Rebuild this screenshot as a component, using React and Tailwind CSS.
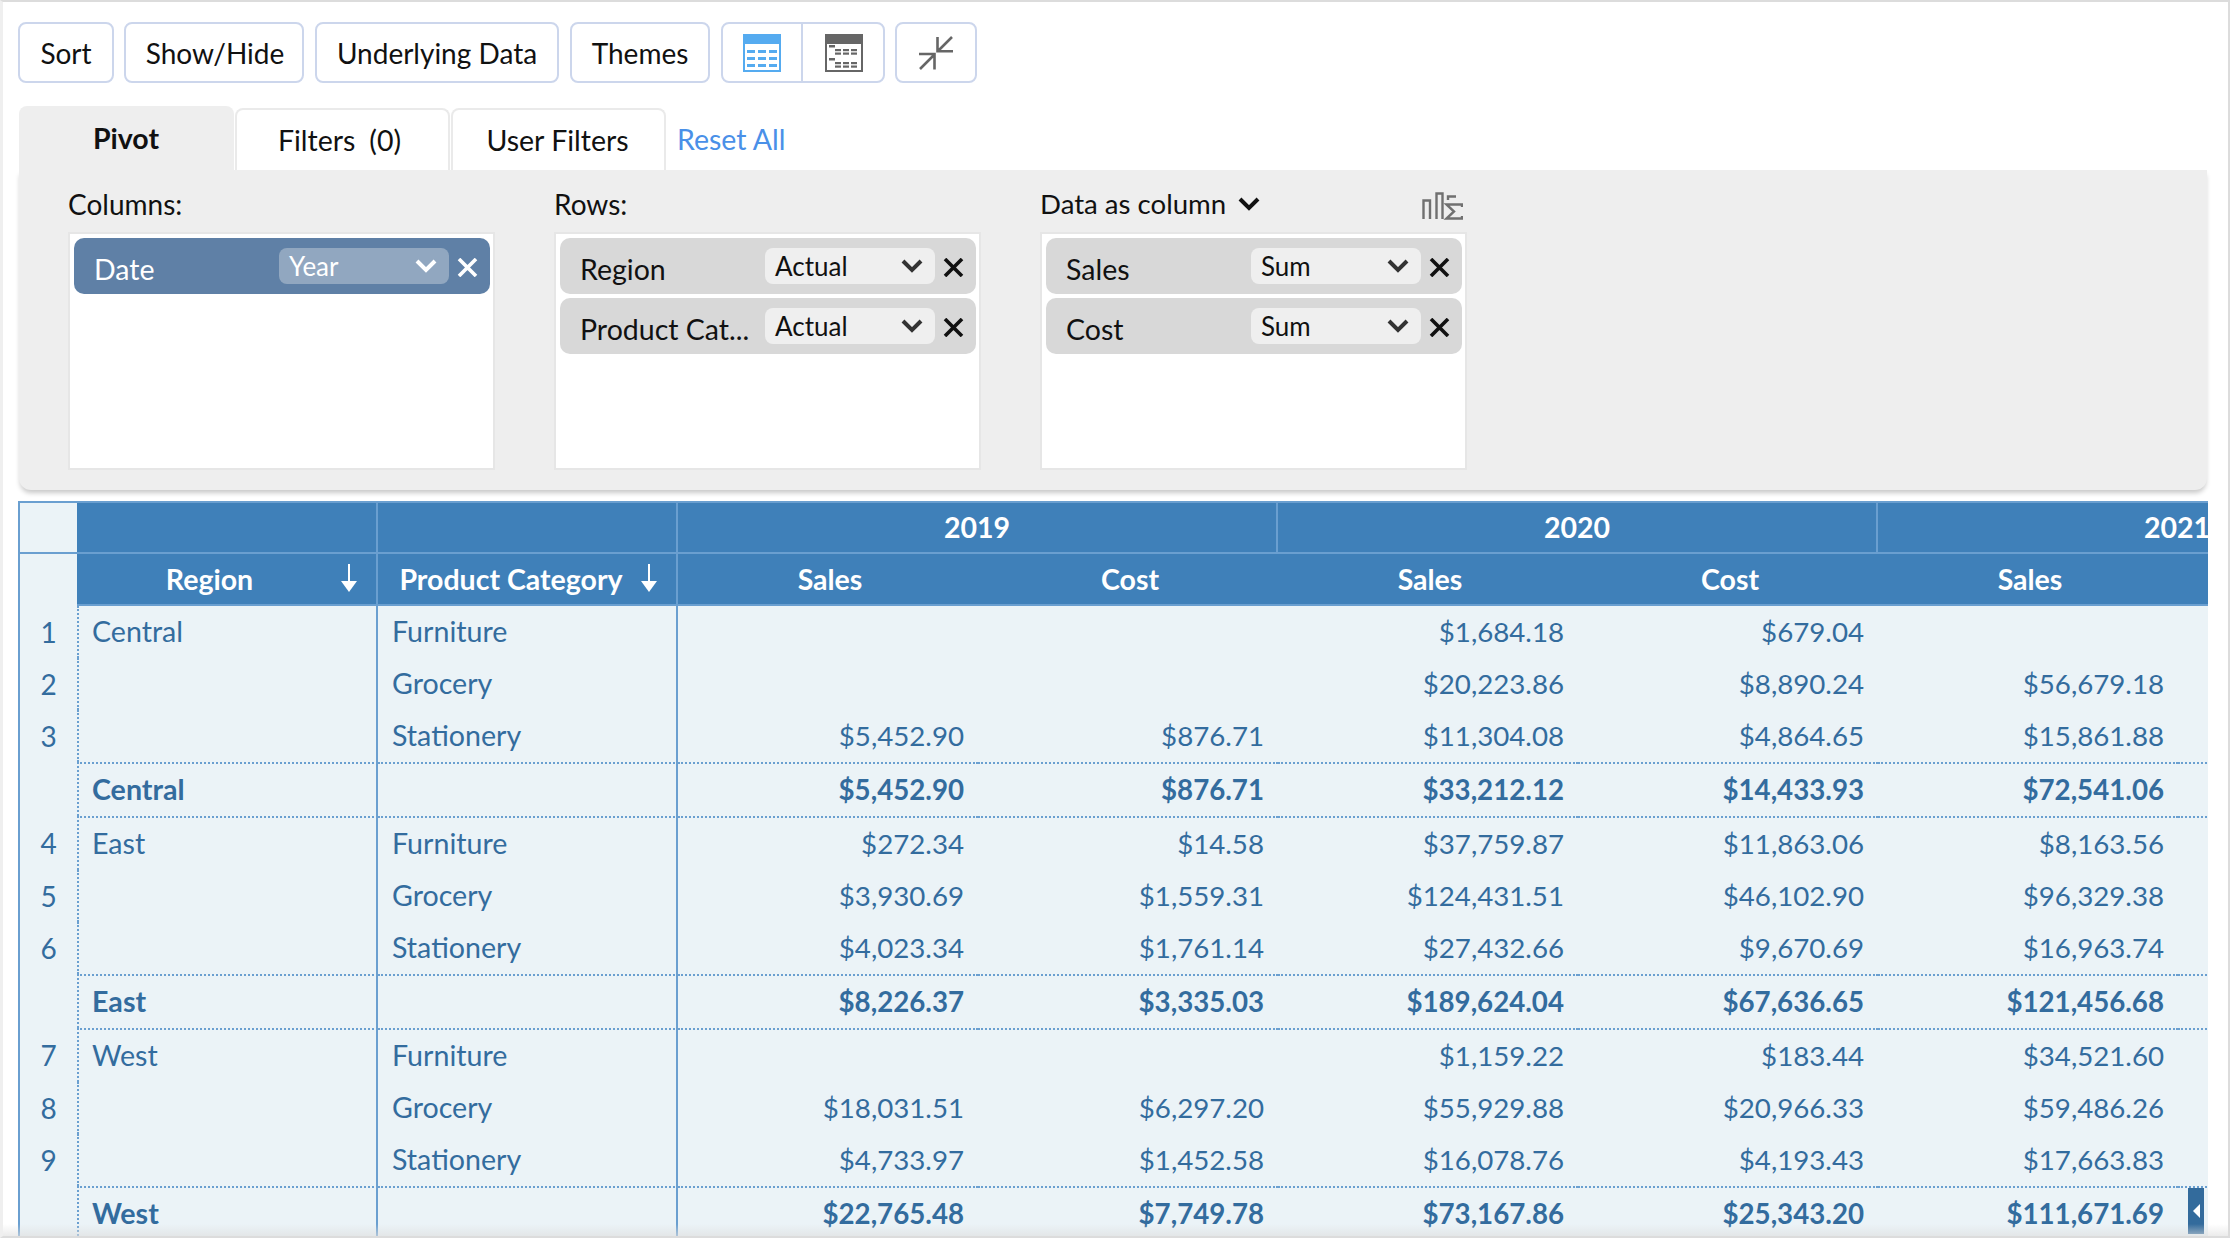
import React from 'react';

const ROWS = [
  { n: 1, region: 'Central', cat: 'Furniture', first: true, v: ['', '', '$1,684.18', '$679.04', ''] },
  { n: 2, cat: 'Grocery', v: ['', '', '$20,223.86', '$8,890.24', '$56,679.18'] },
  { n: 3, cat: 'Stationery', v: ['$5,452.90', '$876.71', '$11,304.08', '$4,864.65', '$15,861.88'] },
  { total: true, region: 'Central', v: ['$5,452.90', '$876.71', '$33,212.12', '$14,433.93', '$72,541.06'] },
  { n: 4, region: 'East', cat: 'Furniture', first: true, v: ['$272.34', '$14.58', '$37,759.87', '$11,863.06', '$8,163.56'] },
  { n: 5, cat: 'Grocery', v: ['$3,930.69', '$1,559.31', '$124,431.51', '$46,102.90', '$96,329.38'] },
  { n: 6, cat: 'Stationery', v: ['$4,023.34', '$1,761.14', '$27,432.66', '$9,670.69', '$16,963.74'] },
  { total: true, region: 'East', v: ['$8,226.37', '$3,335.03', '$189,624.04', '$67,636.65', '$121,456.68'] },
  { n: 7, region: 'West', cat: 'Furniture', first: true, v: ['', '', '$1,159.22', '$183.44', '$34,521.60'] },
  { n: 8, cat: 'Grocery', v: ['$18,031.51', '$6,297.20', '$55,929.88', '$20,966.33', '$59,486.26'] },
  { n: 9, cat: 'Stationery', v: ['$4,733.97', '$1,452.58', '$16,078.76', '$4,193.43', '$17,663.83'] },
  { total: true, region: 'West', v: ['$22,765.48', '$7,749.78', '$73,167.86', '$25,343.20', '$111,671.69'] },
];

const btn = 'h-[61px] flex items-center justify-center bg-white border-2 border-[#ccd6ec] rounded-lg';

function Chevron({ className, color = '#333' }) {
  return (
    <svg width="22" height="14" viewBox="0 0 22 14" className={className}>
      <polyline points="2,2 11,11 20,2" fill="none" stroke={color} strokeWidth="4" />
    </svg>
  );
}

function Cross({ color = '#111' }) {
  return (
    <svg width="21" height="19" viewBox="0 0 21 19" className="shrink-0 mt-[2px]">
      <path d="M2 1 L19 18 M19 1 L2 18" fill="none" stroke={color} strokeWidth="3.6" />
    </svg>
  );
}

function SortArrow() {
  return (
    <svg width="18" height="30" viewBox="0 0 18 30" className="absolute right-[18px] top-[9px]">
      <path d="M9 1 V20" stroke="#fff" strokeWidth="2" />
      <path d="M1 18 H17 L9 29 Z" fill="#fff" />
    </svg>
  );
}

function GridIcon({ color, line, gray }) {
  const rows = [16, 23, 30];
  return (
    <svg width="38" height="38" viewBox="0 0 38 38">
      <rect x="0" y="0" width="38" height="38" fill={color} />
      <rect x="2" y="10" width="34" height="26" fill="#fff" />
      {gray ? (
        <>
          <rect x="4" y="11" width="6" height="2.5" fill={line} />
          <rect x="4" y="24" width="6" height="2.5" fill={line} />
          {[15, 18.5, 28, 31.5].map((y) =>
            [10, 18, 26].map((x) => <rect key={`${x}-${y}`} x={x} y={y} width="6" height="2.2" fill={line} />)
          )}
        </>
      ) : (
        rows.map((y) =>
          [4, 15, 26].map((x) => <rect key={`${x}-${y}`} x={x} y={y} width="8" height="3" fill={line} />)
        )
      )}
    </svg>
  );
}

function Chip({ label, value, active }) {
  return (
    <div className={`h-[56px] rounded-[10px] flex items-center pl-[20px] pr-[12px] ${active ? 'bg-[#5f80a6] text-white' : 'bg-[#d8d8d8] text-[#111]'}`}>
      <span className="flex-1 pt-[6px] text-[28.5px] whitespace-nowrap overflow-hidden">{label}</span>
      <div className={`w-[170px] h-[36px] rounded-lg flex items-center justify-between pl-[10px] pr-[12px] text-[26px] ${active ? 'bg-[#91a7c0] text-white' : 'bg-[#efefef] text-[#111]'}`}>
        <span>{value}</span>
        <Chevron color={active ? '#fff' : '#333'} />
      </div>
      <div className="ml-[8px]">
        <Cross color={active ? '#fff' : '#111'} />
      </div>
    </div>
  );
}

function Box({ children }) {
  return (
    <div className="w-[427px] h-[238px] bg-white border-2 border-[#e6e6e6] pt-[4px] pl-[4px] pr-[3px] flex flex-col gap-[4px]">{children}</div>
  );
}

export default function App() {
  return (
    <div className="relative w-[2230px] h-[1238px] overflow-hidden bg-white border-t-2 border-t-[#dcdcdc] border-l-[3px] border-l-[#efefef] border-r-2 border-r-[#dcdcdc] border-b-2 border-b-[#dcdcdc] font-[Lato,sans-serif] text-[28px] text-[#111] pl-[15px]">
      {/* toolbar */}
      <div className="flex mt-[20px]">
        <button className={`${btn} w-[96px]`}>Sort</button>
        <button className={`${btn} w-[180px] ml-[10px] pl-[2px]`}>Show/Hide</button>
        <button className={`${btn} w-[244px] ml-[11px]`}>Underlying Data</button>
        <button className={`${btn} w-[140px] ml-[11px]`}>Themes</button>
        <div className={`${btn} w-[164px] ml-[11px]`}>
          <div className="w-[80px] h-full flex items-center justify-center border-r-2 border-r-[#ccd6ec]">
            <GridIcon color="#55abf0" line="#55abf0" />
          </div>
          <div className="flex-1 h-full flex items-center justify-center pl-[2px]">
            <GridIcon color="#666" line="#666" gray />
          </div>
        </div>
        <div className={`${btn} w-[82px] ml-[10px]`}>
          <svg width="36" height="36" viewBox="0 0 36 36" fill="none" stroke="#666" strokeWidth="2.6">
            <path d="M34 2 L20 16 M19.5 2 V16.2 H35" />
            <path d="M2 34 L16 20 M1 19 H16.5 V34.5" />
          </svg>
        </div>
      </div>

      {/* tabs */}
      <div className="flex items-end ml-px mt-[23px] h-[64px] text-[28.5px]">
        <div className="w-[215px] h-[64px] bg-[#eeeeee] rounded-t-lg flex items-center justify-center font-bold pr-[1px]">Pivot</div>
        <div className="w-[215px] h-[62px] ml-[1px] border-2 border-b-0 border-[#eaeaea] rounded-t-lg flex items-center justify-center gap-[14px] pr-[6px]">
          <span>Filters</span>
          <span>(0)</span>
        </div>
        <div className="w-[215px] h-[62px] ml-[1px] border-2 border-b-0 border-[#eaeaea] rounded-t-lg flex items-center justify-center pr-[2px]">User Filters</div>
        <a className="ml-[11px] h-[62px] flex items-center text-[#4a90e8]">Reset All</a>
      </div>

      {/* pivot panel */}
      <div className="ml-px w-[2188px] h-[320px] bg-[#eeeeee] rounded-b-xl shadow-[0_4px_5px_-1px_rgba(0,0,0,0.22)] pl-[49px] flex gap-[59px]">
        <div>
          <div className="h-[62px] flex items-center pt-[5px]">Columns:</div>
          <Box>
            <Chip label="Date" value="Year" active />
          </Box>
        </div>
        <div>
          <div className="h-[62px] flex items-center pt-[5px]">Rows:</div>
          <Box>
            <Chip label="Region" value="Actual" />
            <Chip label="Product Cat..." value="Actual" />
          </Box>
        </div>
        <div>
          <div className="h-[62px] w-[427px] flex items-center pt-[5px]">
            <span className="text-[27.6px]">Data as column</span>
            <Chevron className="ml-[12px]" color="#111" />
            <svg width="42" height="30" viewBox="0 0 42 30" fill="none" stroke="#707070" strokeWidth="2.4" className="ml-auto mr-[4px] mt-[4px]">
              <path d="M2.5 28 V9.5 H9 V28" />
              <path d="M15.5 28 V2.5 H21.5 V28" />
              <path d="M27 9 V5.5 H35" />
              <path d="M41 16 V13.5 H25.5 L33 20.5 L25.5 27.5 H41 V25" />
            </svg>
          </div>
          <Box>
            <Chip label="Sales" value="Sum" />
            <Chip label="Cost" value="Sum" />
          </Box>
        </div>
      </div>

      {/* pivot table */}
      <div className="w-[2190px] mt-[11px] overflow-hidden">
        <table className="table-fixed w-[2460px] border-separate border-spacing-0">
          <colgroup>
            <col className="w-[59px]" />
            <col className="w-[301px]" />
            {[0, 1, 2, 3, 4, 5, 6].map((i) => (
              <col key={i} className="w-[300px]" />
            ))}
          </colgroup>
          <thead className="text-[28.5px]">
            <tr className="h-[53px]">
              <th className="bg-[#ebf3f7] border-2 border-r-0 border-[#6a9fd0]"></th>
              <th className="bg-[#3f80b9] border-t-2 border-b-2 border-r-2 border-[#6a9fd0]"></th>
              <th className="bg-[#3f80b9] border-t-2 border-b-2 border-r-2 border-[#6a9fd0]"></th>
              {['2019', '2020', '2021'].map((y) => (
                <th key={y} colSpan={2} className="bg-[#3f80b9] border-t-2 border-b-2 border-r-2 border-[#6a9fd0] text-white font-bold text-center">{y}</th>
              ))}
            </tr>
            <tr className="h-[52px]">
              <th className="bg-[#ebf3f7] border-l-2 border-[#6a9fd0]"></th>
              <th className="relative bg-[#3f80b9] border-b-2 border-r-2 border-[#6a9fd0] text-white font-bold text-center pr-[34px]">
                Region
                <SortArrow />
              </th>
              <th className="relative bg-[#3f80b9] border-b-2 border-r-2 border-[#6a9fd0] text-white font-bold text-center pr-[32px] whitespace-nowrap">
                Product Category
                <SortArrow />
              </th>
              {['Sales', 'Cost', 'Sales', 'Cost', 'Sales', ''].map((h, i) => (
                <th key={i} className="bg-[#3f80b9] border-b-2 border-[#6a9fd0] text-white font-bold text-center pl-[4px]">{h}</th>
              ))}
            </tr>
          </thead>
          <tbody className="bg-[#ebf3f7] text-[#336c9e]">
            {ROWS.map((r, i) => {
              const top = (r.first && i > 0) || r.total;
              const topCls = top ? 'border-t-2 border-t-[#6a9fd0] [border-top-style:dotted]' : '';
              const h = top ? 'h-[54px]' : 'h-[52px]';
              const weight = r.total ? 'font-bold' : '';
              return (
                <tr key={i} className={`${h} ${weight}`}>
                  <td className="border-l-2 border-l-[#6a9fd0] text-center font-normal pb-[1px]">{r.n}</td>
                  <td className={`border-l-2 border-l-[#6a9fd0] [border-left-style:dotted] border-r-2 border-r-[#6a9fd0] pl-[13px] pb-[1px] text-[28.6px] ${topCls}`}>{r.region}</td>
                  <td className={`border-r-2 border-r-[#6a9fd0] pl-[14px] pb-[1px] text-[28.6px] ${topCls}`}>{r.cat}</td>
                  {r.v.map((val, j) => (
                    <td key={j} className={`text-right pr-[14px] pb-[1px] text-[27.7px] ${topCls}`}>{val}</td>
                  ))}
                  <td className={topCls}></td>
                </tr>
              );
            })}
          </tbody>
        </table>
      </div>

      {/* collapse handle */}
      <div className="absolute left-[2185px] top-[1186px] w-[16px] h-[46px] bg-[#336b9c] flex items-center justify-center">
        <svg width="7" height="14" viewBox="0 0 7 14">
          <path d="M7 0 V14 L0 7 Z" fill="#fff" />
        </svg>
      </div>
      <div className="absolute left-0 right-0 bottom-0 h-[12px] bg-gradient-to-b from-transparent to-[#dedede]/60 pointer-events-none"></div>
    </div>
  );
}
